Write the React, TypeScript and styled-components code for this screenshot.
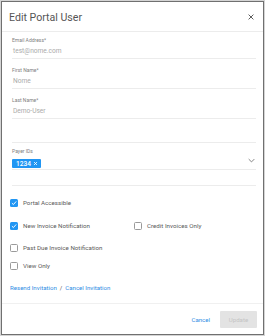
import styled, { createGlobalStyle } from "styled-components";

const GlobalStyle = createGlobalStyle`
	html, body {
		margin: 0;
		padding: 0;
		background: #fff;
	}
	body {
		font-family: Roboto, "Liberation Sans", sans-serif;
	}
`;

const Frame = styled.div`
	width: 265px;
	height: 336px;
	box-sizing: border-box;
	border: 1px solid #d4d4d4;
`;

const Dialog = styled.div`
	height: 100%;
	box-sizing: border-box;
	border: 1px solid #707070;
	display: flex;
	flex-direction: column;
	background: #fff;
`;

const Header = styled.div`
	height: 29px;
	display: flex;
	align-items: center;
	justify-content: space-between;
	padding: 0 9px 0 7px;
	border-bottom: 1px solid #ececec;
`;

const Title = styled.div`
	font-size: 10.6px;
	color: #555;
	padding-top: 1px;
`;

const Body = styled.div`
	flex: 1;
	padding: 4px 7px 0 10px;
	display: flex;
	flex-direction: column;
`;

const Field = styled.div<{ $gap?: number }>`
	border-bottom: 1px solid #ececec;
	margin-bottom: ${(p) => p.$gap ?? 7}px;
	position: relative;
`;

const Label = styled.div`
	font-size: 5px;
	line-height: 8px;
	color: #808080;
`;

const Value = styled.div`
	font-size: 6.6px;
	line-height: 14px;
	color: #aaa;
	padding-left: 1px;
`;

const Divider = styled.div<{ $top: number }>`
	margin-top: ${(p) => p.$top}px;
	border-top: 1px solid #ececec;
`;

const ChipRow = styled.div`
	display: flex;
	align-items: flex-end;
	height: 13px;
	padding-bottom: 1px;
`;

const Chip = styled.span`
	display: inline-flex;
	align-items: center;
	gap: 2px;
	height: 9px;
	padding: 0 3px 0 4px;
	background: #2196f3;
	color: #fff;
	font-size: 6.6px;
	font-weight: 500;
	border-radius: 1px;
`;

const Chevron = styled.svg`
	position: absolute;
	right: 1px;
	top: 11px;
`;

const Checks = styled.div`
	display: grid;
	grid-template-columns: 124px 1fr;
	margin: 5px 0 0 -2px;
`;

const CheckRow = styled.label<{ $h: number }>`
	display: flex;
	align-items: center;
	gap: 5px;
	height: ${(p) => p.$h}px;
	font-size: 6.2px;
	color: #5a5a5a;
`;

const Box = styled.span<{ $on: boolean }>`
	width: 8px;
	height: 8px;
	box-sizing: border-box;
	border-radius: 1.5px;
	border: ${(p) => (p.$on ? "none" : "1px solid #9a9a9a")};
	background: ${(p) => (p.$on ? "#2196f3" : "#fff")};
	display: inline-flex;
	align-items: center;
	justify-content: center;
	flex-shrink: 0;
`;

const Links = styled.div`
	margin: 11px 0 0 -2px;
	line-height: 8px;
	font-size: 6.1px;
	color: #2f8de4;
	display: flex;
	gap: 3px;
`;

const Slash = styled.span`
	color: #555;
`;

const Footer = styled.div`
	height: 30px;
	border-top: 1px solid #f0f0f0;
	display: flex;
	align-items: center;
	justify-content: flex-end;
	gap: 10px;
	padding-right: 6px;
`;

const CancelBtn = styled.span`
	font-size: 6.1px;
	color: #2f8de4;
`;

const UpdateBtn = styled.span`
	width: 37px;
	height: 17px;
	display: flex;
	align-items: center;
	justify-content: center;
	background: #e3e3e3;
	color: #c4c4c4;
	font-size: 6.1px;
	border-radius: 1px;
`;

const Check = ({ on, label, h }: { on: boolean; label?: string; h: number }) => (
	<CheckRow $h={h}>
		<Box $on={on}>
			{on && (
				<svg width="6" height="6" viewBox="0 0 10 10">
					<path d="M1.5 5.2 L4 7.6 L8.6 2.4" fill="none" stroke="#fff" strokeWidth="1.6" />
				</svg>
			)}
		</Box>
		{label}
	</CheckRow>
);

export default function App() {
	return (
		<>
			<GlobalStyle />
			<Frame>
				<Dialog>
					<Header>
						<Title>Edit Portal User</Title>
						<svg width="6" height="6" viewBox="0 0 10 10">
							<path d="M1 1 L9 9 M9 1 L1 9" stroke="#555" strokeWidth="1.6" />
						</svg>
					</Header>
					<Body>
						<Field>
							<Label>Email Address*</Label>
							<Value>test@nome.com</Value>
						</Field>
						<Field>
							<Label>First Name*</Label>
							<Value>Nome</Value>
						</Field>
						<Field>
							<Label>Last Name*</Label>
							<Value>Demo-User</Value>
						</Field>
						<Divider $top={16} />
						<Field $gap={0} style={{ marginTop: 4 }}>
							<Label>Payer IDs</Label>
							<ChipRow>
								<Chip>
									1234
									<svg width="5" height="5" viewBox="0 0 10 10">
										<path d="M2 2 L8 8 M8 2 L2 8" stroke="#fff" strokeWidth="1.6" />
									</svg>
								</Chip>
							</ChipRow>
							<Chevron width="7" height="5" viewBox="0 0 10 6">
								<path d="M1 1 L5 5 L9 1" fill="none" stroke="#777" strokeWidth="1.3" />
							</Chevron>
						</Field>
						<Divider $top={15} />
						<Checks>
							<Check on label="Portal Accessible" h={23} />
							<span />
							<Check on label="New Invoice Notification" h={23} />
							<Check on={false} label="Credit Invoices Only" h={23} />
							<Check on={false} label="Past Due Invoice Notification" h={22} />
							<span />
							<Check on={false} label="View Only" h={14} />
						</Checks>
						<Links>
							<span>Resend Invitation</span>
							<Slash>/</Slash>
							<span>Cancel Invitation</span>
						</Links>
					</Body>
					<Footer>
						<CancelBtn>Cancel</CancelBtn>
						<UpdateBtn>Update</UpdateBtn>
					</Footer>
				</Dialog>
			</Frame>
		</>
	);
}
